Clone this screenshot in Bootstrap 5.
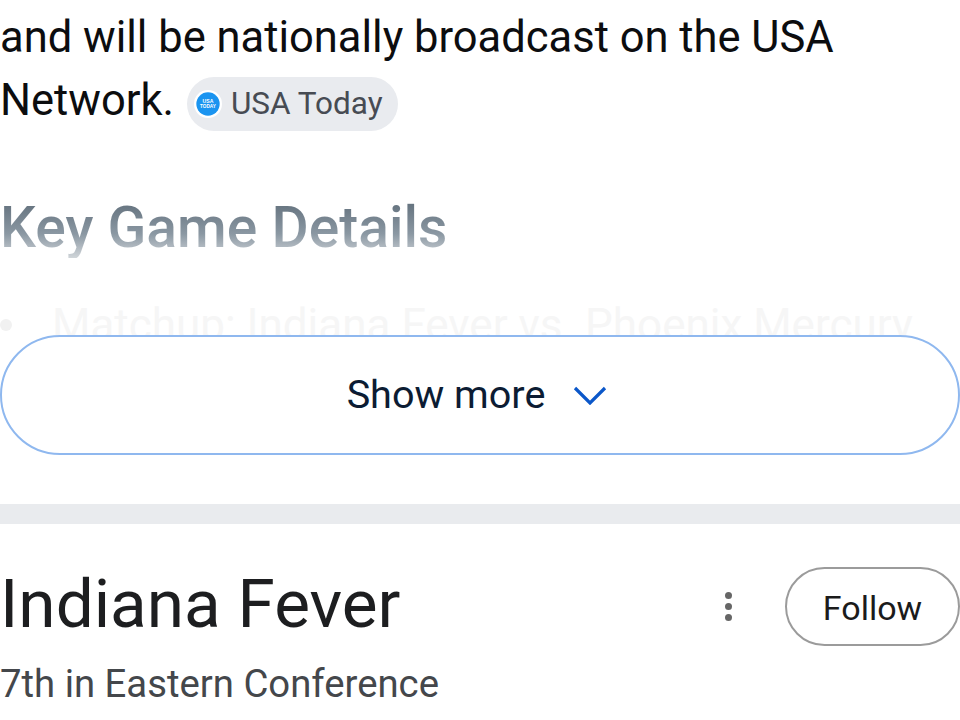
<!DOCTYPE html>
<html lang="en">
<head>
  <meta charset="UTF-8">
  <meta name="viewport" content="width=device-width, initial-scale=1">
  <title>Indiana Fever</title>
  <link href="https://cdn.jsdelivr.net/npm/bootstrap@5.3.0/dist/css/bootstrap.min.css" rel="stylesheet">
  <style>
    body { font-family: "Roboto", "Liberation Sans", sans-serif; background: #fff; overflow: hidden; height: 720px; }
    .answer-box { height: 335px; overflow: hidden; }
    .answer-text { font-size: 43.5px; line-height: 63px; color: #0c0d0f; padding-top: 6px; white-space: nowrap; }
    .source-chip { display: inline-flex; align-items: center; gap: 9px; height: 54px; width: 211px; padding: 0 0 0 7px; margin-left: 2px; border-radius: 27px; background: #e9ebef; color: #474b53; font-size: 31.5px; vertical-align: middle; }
    .source-logo { width: 28px; height: 28px; flex: none; }
    .fade-title { font-size: 57px; font-weight: 500; line-height: 60px; margin: 66px 0 0; background: linear-gradient(#5f6d79, #8b98a3 60%, #d0d5d9); -webkit-background-clip: text; background-clip: text; color: transparent; }
    .fade-item { font-size: 44px; line-height: 50px; color: #f6f6f6; margin-top: 42px; }
    .fade-dot { width: 12px; height: 12px; border-radius: 50%; background: #f1f1f1; margin-right: 40px; flex: none; }
    .more-btn { height: 120px; border: 2px solid #8fb8ef; border-radius: 60px; background: #fff; font-size: 39.6px; color: #0c1c33; gap: 28px; padding: 0 6px 0 0; }
    .section-gap { height: 20px; background: #e9ebee; margin-top: 49px; }
    .team-name { font-size: 67.5px; font-weight: 400; line-height: 70px; color: #1d1e20; margin: 0; position: relative; top: -4px; }
    .team-rank { font-size: 38.3px; line-height: 44px; color: #44474b; margin-top: 15px; }
    .follow-btn { width: 175px; height: 79px; border: 2px solid #9b9b9b; border-radius: 40px; background: #fff; font-size: 34px; color: #1b1b1b; margin-left: 53px; padding-top: 4px; position: relative; top: -1px; }
    .team-row { padding-top: 44px; }
    .dots { gap: 3.5px; position: relative; top: -1px; }
    .dots span { width: 7.5px; height: 7.5px; border-radius: 50%; background: #666; display: block; }
  </style>
</head>
<body class="m-0">
  <div class="answer-box">
    <div class="answer-text">and will be nationally broadcast on the USA<br>Network.
      <span class="source-chip">
        <svg class="source-logo" viewBox="0 0 30 30">
          <circle cx="15" cy="15" r="15" fill="#fff"/>
          <circle cx="15" cy="15" r="12.5" fill="#1a94f0"/>
          <text x="15" y="14" text-anchor="middle" font-size="5.5" font-weight="700" fill="#fff" font-family="Liberation Sans">USA</text>
          <text x="15" y="19.5" text-anchor="middle" font-size="5" font-weight="700" fill="#fff" font-family="Liberation Sans">TODAY</text>
        </svg>
        USA Today
      </span>
    </div>
    <h2 class="fade-title">Key Game Details</h2>
    <div class="fade-item d-flex align-items-center text-nowrap"><span class="fade-dot"></span>Matchup: Indiana Fever vs. Phoenix Mercury</div>
  </div>

  <button class="more-btn w-100 d-flex align-items-center justify-content-center">
    Show more
    <svg width="34" height="20" viewBox="0 0 34 20" fill="none"><path d="M2 3 L17 18 L32 3" stroke="#0b57c9" stroke-width="3.2"/></svg>
  </button>

  <div class="section-gap"></div>

  <div class="team-row d-flex align-items-center justify-content-between">
    <h1 class="team-name">Indiana Fever</h1>
    <div class="d-flex align-items-center">
      <div class="dots d-flex flex-column"><span></span><span></span><span></span></div>
      <button class="follow-btn">Follow</button>
    </div>
  </div>
  <div class="team-rank">7th in Eastern Conference</div>

  <script src="https://cdn.jsdelivr.net/npm/bootstrap@5.3.0/dist/js/bootstrap.bundle.min.js"></script>
</body>
</html>
